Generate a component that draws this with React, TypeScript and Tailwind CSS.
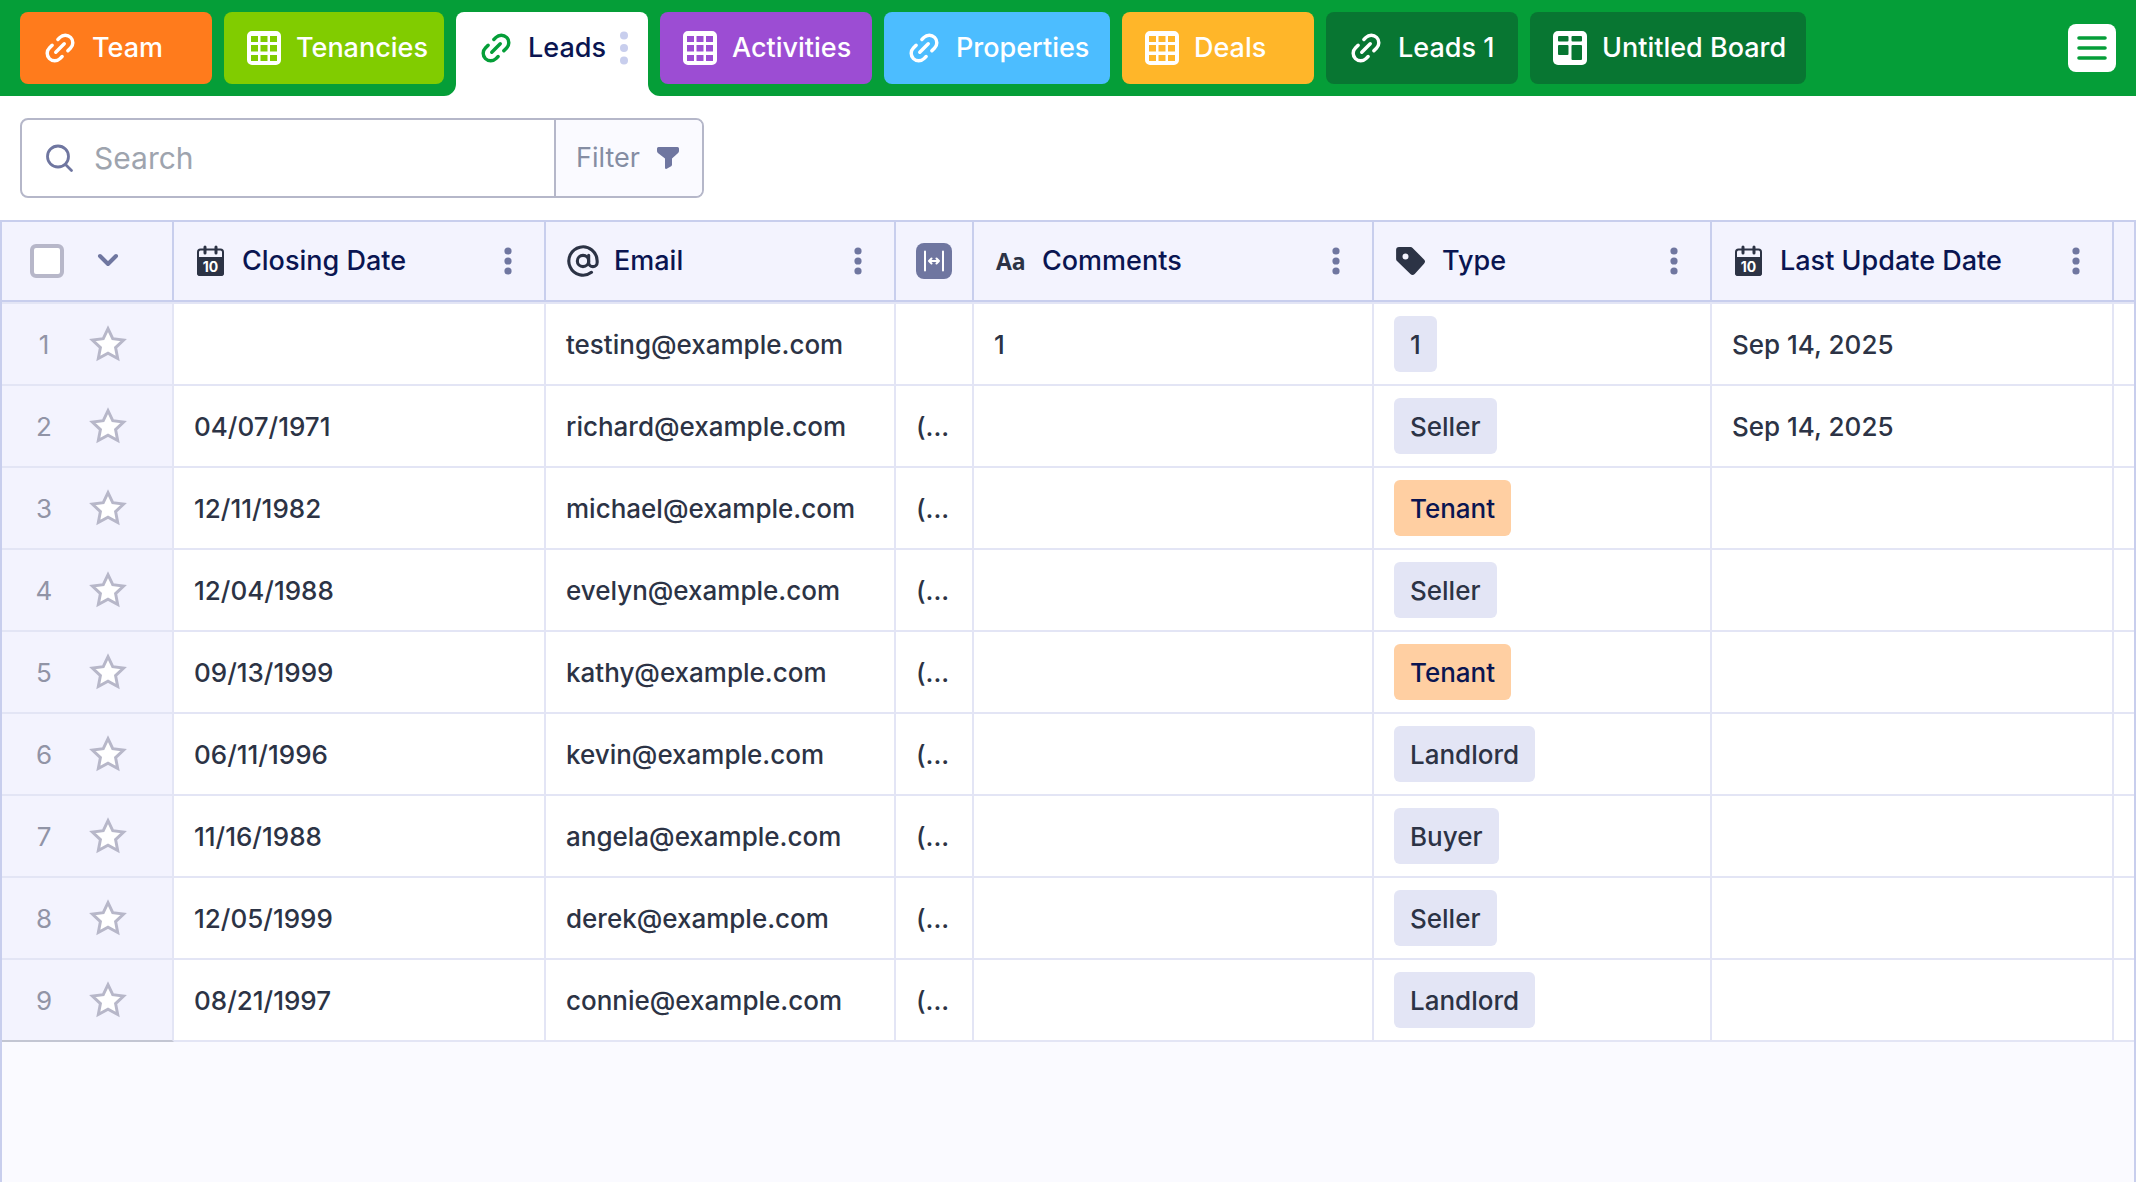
import type { ReactNode } from "react";
import { AtSign } from "lucide-react";

type IconProps = { className?: string };

const LinkIcon = ({ className = "" }: IconProps) => (
  <svg viewBox="0 0 24 24" className={`size-10 p-0.5 ${className}`} fill="none" stroke="currentColor" strokeWidth="2.3" strokeLinecap="round" aria-hidden="true">
    <g transform="rotate(-45 12 12)">
      <path d="M9 17H7A5 5 0 0 1 7 7h2.6" />
      <path d="M15 7h2a5 5 0 0 1 0 10h-2.6" />
      <path d="M8 12h8" />
    </g>
  </svg>
);

const GridIcon = () => (
  <svg viewBox="0 0 40 40" className="size-10" fill="currentColor" aria-hidden="true">
    <path
      fillRule="evenodd"
      d="M8 3h24a5 5 0 0 1 5 5v24a5 5 0 0 1-5 5H8a5 5 0 0 1-5-5V8a5 5 0 0 1 5-5ZM7 8v6h7V8ZM16.500 8v6h7V8ZM26 8v6h7V8ZM7 17v6.500h7V17ZM16.500 17v6.500h7V17ZM26 17v6.500h7V17ZM7 27v6h7v-6ZM16.500 27v6h7v-6ZM26 27v6h7v-6Z"
    />
  </svg>
);

const BoardIcon = () => (
  <svg viewBox="0 0 40 40" className="size-10" aria-hidden="true">
    <rect x="3" y="3" width="34" height="34" rx="5" fill="currentColor" />
    <g fill="#087632">
      <rect x="8" y="8" width="10.500" height="5.500" rx="1" />
      <rect x="21.500" y="8" width="10.500" height="5.500" rx="1" />
      <rect x="8" y="17" width="10.500" height="10" rx="1" />
      <rect x="21.500" y="17" width="10.500" height="15" rx="1" />
    </g>
  </svg>
);

const CalendarIcon = () => (
  <svg viewBox="0 0 32 32" className="size-8" aria-hidden="true">
    <rect x="4" y="4.500" width="25" height="25.500" rx="2.500" fill="none" stroke="#2c3345" strokeWidth="2" />
    <path d="M3 12h27v16a3 3 0 0 1-3 3H6a3 3 0 0 1-3-3Z" fill="#2c3345" />
    <path d="M11 2v6M22 2v6" stroke="#2c3345" strokeWidth="3" strokeLinecap="round" />
    <text x="16.500" y="27" textAnchor="middle" fontSize="14" fontWeight="700" fill="#fff" fontFamily="Inter, sans-serif">10</text>
  </svg>
);

const TagIcon = () => (
  <svg viewBox="0 0 32 32" className="size-8" aria-hidden="true">
    <path
      fillRule="evenodd"
      fill="#2c3345"
      d="M5 2h11.500a3 3 0 0 1 2.100.900L30 14.500a3 3 0 0 1 0 4.200L20.700 29a3 3 0 0 1-4.300 0L3 16a3 3 0 0 1-.900-2.100V5A3 3 0 0 1 5 2Zm6.500 6.500a3 3 0 1 0 0 6 3 3 0 0 0 0-6Z"
    />
  </svg>
);

const DotsIcon = ({ className = "" }: IconProps) => (
  <svg viewBox="0 0 8 28" className={className} fill="currentColor" aria-hidden="true">
    <circle cx="4" cy="4" r="3.600" />
    <circle cx="4" cy="14" r="3.600" />
    <circle cx="4" cy="24" r="3.600" />
  </svg>
);

const StarIcon = () => (
  <svg viewBox="1 1 38 38" className="size-10" aria-hidden="true">
    <path
      d="M20 5.500l4.500 9.500 10.300 1.300-7.600 7.100 2 10.400-9.200-5.100-9.200 5.100 2-10.400-7.600-7.100L15.500 15Z"
      fill="#fff"
      stroke="#b7b7c9"
      strokeWidth="2.800"
    />
  </svg>
);

type Tab = { label: string; icon: ReactNode; style: string };

const tabs: Tab[] = [
  { label: "Team", icon: <LinkIcon />, style: "w-[192px] bg-[#ff7b1c]" },
  { label: "Tenancies", icon: <GridIcon />, style: "w-[220px] bg-[#81cc00]" },
  { label: "Leads", icon: <LinkIcon className="text-[#059e38]" />, style: "" },
  { label: "Activities", icon: <GridIcon />, style: "w-[212px] bg-[#9c4dd3]" },
  { label: "Properties", icon: <LinkIcon />, style: "w-[226px] bg-[#4cbdff]" },
  { label: "Deals", icon: <GridIcon />, style: "w-[192px] bg-[#ffb629]" },
  { label: "Leads 1", icon: <LinkIcon />, style: "w-[192px] bg-[#087632]" },
  { label: "Untitled Board", icon: <BoardIcon />, style: "w-[276px] bg-[#087632]" },
];

const columns: { label: string; icon: ReactNode; width: string }[] = [
  { label: "Closing Date", icon: <CalendarIcon />, width: "w-[372px]" },
  { label: "Email", icon: <AtSign className="size-[34px] shrink-0 text-[#2c3345]" strokeWidth={2.2} />, width: "w-[350px]" },
  { label: "", icon: null, width: "w-[78px]" },
  {
    label: "Comments",
    icon: <span className="pl-0.5 font-['Open_Sans',sans-serif] text-[23px] font-bold text-[#2c3345]">Aa</span>,
    width: "w-[400px]",
  },
  { label: "Type", icon: <TagIcon />, width: "w-[338px]" },
  { label: "Last Update Date", icon: <CalendarIcon />, width: "w-[402px]" },
];

const rows = [
  { date: "", email: "testing@example.com", phone: "", comments: "1", type: "1", updated: "Sep 14, 2025" },
  { date: "04/07/1971", email: "richard@example.com", phone: "(...", comments: "", type: "Seller", updated: "Sep 14, 2025" },
  { date: "12/11/1982", email: "michael@example.com", phone: "(...", comments: "", type: "Tenant", updated: "" },
  { date: "12/04/1988", email: "evelyn@example.com", phone: "(...", comments: "", type: "Seller", updated: "" },
  { date: "09/13/1999", email: "kathy@example.com", phone: "(...", comments: "", type: "Tenant", updated: "" },
  { date: "06/11/1996", email: "kevin@example.com", phone: "(...", comments: "", type: "Landlord", updated: "" },
  { date: "11/16/1988", email: "angela@example.com", phone: "(...", comments: "", type: "Buyer", updated: "" },
  { date: "12/05/1999", email: "derek@example.com", phone: "(...", comments: "", type: "Seller", updated: "" },
  { date: "08/21/1997", email: "connie@example.com", phone: "(...", comments: "", type: "Landlord", updated: "" },
];

function TabBar() {
  return (
    <header className="flex h-24 items-start justify-between bg-[#059e38] px-5 pt-3">
      <nav className="flex gap-3 text-[27px] font-medium text-white" aria-label="Tabs">
        {tabs.map((tab) =>
          tab.label === "Leads" ? (
            <div key={tab.label} className="relative flex h-[84px] w-[192px] items-start rounded-t-lg bg-white">
              <button type="button" aria-current="page" className="flex h-[72px] items-center gap-3 pl-5 text-[#0a1551]">
                {tab.icon}
                {tab.label}
              </button>
              <button type="button" aria-label="Tab options" className="ml-auto mr-5 flex h-[72px] items-center text-[#c8ceed]">
                <svg viewBox="0 0 8 34" className="h-[34px] w-2" fill="currentColor" aria-hidden="true">
                  <circle cx="4" cy="4.500" r="4" />
                  <circle cx="4" cy="17" r="4" />
                  <circle cx="4" cy="29.500" r="4" />
                </svg>
              </button>
              <svg viewBox="0 0 12 12" className="absolute bottom-0 right-full size-3" fill="#fff" aria-hidden="true">
                <path d="M12 0v12H0A12 12 0 0 0 12 0Z" />
              </svg>
              <svg viewBox="0 0 12 12" className="absolute bottom-0 left-full size-3" fill="#fff" aria-hidden="true">
                <path d="M0 0v12h12A12 12 0 0 1 0 0Z" />
              </svg>
            </div>
          ) : (
            <button
              key={tab.label}
              type="button"
              className={`flex h-[72px] items-center gap-3 whitespace-nowrap rounded-lg pl-5 ${tab.style}`}
            >
              {tab.icon}
              {tab.label}
            </button>
          ),
        )}
      </nav>
      <button type="button" aria-label="Menu" className="mt-3 flex size-12 items-center justify-center rounded-lg bg-white">
        <svg viewBox="0 0 48 48" className="size-12" stroke="#059e38" strokeWidth="3.600" strokeLinecap="round" aria-hidden="true">
          <path d="M11 14h26M11 24h26M11 34h26" />
        </svg>
      </button>
    </header>
  );
}

function Toolbar() {
  return (
    <div className="flex px-5 py-[22px]">
      <div className="flex h-20 w-[684px] overflow-hidden rounded-lg border-2 border-[#b5b7c9]">
        <label className="flex min-w-0 flex-1 items-center gap-[18px] pl-[22px]">
          <svg viewBox="0 0 32 32" className="size-8 shrink-0" fill="none" stroke="#6f76a0" strokeWidth="2.800" strokeLinecap="round" aria-hidden="true">
            <circle cx="14" cy="14.500" r="10.500" />
            <path d="M21.500 22.500l6 6" />
          </svg>
          <input
            type="search"
            placeholder="Search"
            aria-label="Search"
            className="min-w-0 flex-1 bg-transparent text-[30px] text-[#2c3345] outline-none placeholder:text-[#9ea4ae]"
          />
        </label>
        <button
          type="button"
          className="flex w-[148px] items-center gap-4 border-l-2 border-[#b5b7c9] bg-[#fafaff] pl-5 text-[27px] text-[#858da3]"
        >
          Filter
          <svg viewBox="0 0 24 24" className="size-6" fill="#6f76a0" aria-hidden="true">
            <path d="M2.500 1h19a1.500 1.500 0 0 1 1.500 1.500V5c0 .800-.300 1.500-.900 2L16 12.500v6.300c0 .600-.300 1.100-.800 1.400l-4.500 2.500A1.200 1.200 0 0 1 9 21.600v-9.100L1.900 7A2.500 2.500 0 0 1 1 5V2.500A1.500 1.500 0 0 1 2.500 1Z" />
          </svg>
        </button>
      </div>
    </div>
  );
}

const headCell = "h-[82px] border-y-2 border-r-2 border-[#c8ceed] bg-[#f3f3fe] p-0 text-left font-medium";

function HeadRow() {
  return (
    <tr className="text-[27px] text-[#0a1551]">
      <th scope="col" className={`${headCell} w-[172px]`}>
        <div className="flex items-center gap-7 pl-7">
          <input
            type="checkbox"
            aria-label="Select all rows"
            className="size-[34px] appearance-none rounded-md border-4 border-[#b7b7c9] bg-white"
          />
          <button type="button" aria-label="Selection options" className="flex size-8 items-center justify-center">
            <svg viewBox="0 0 24 24" className="size-6" fill="none" stroke="#6f76a0" strokeWidth="4" strokeLinecap="round" strokeLinejoin="round" aria-hidden="true">
              <path d="M4 7l8 8 8-8" />
            </svg>
          </button>
        </div>
      </th>
      {columns.map((column) => (
        <th key={column.label} scope="col" className={`${headCell} ${column.width}`}>
          {column.label ? (
            <div className="flex items-center pl-5 pr-4">
              <span className="mr-4 flex w-8 shrink-0 items-center">{column.icon}</span>
              {column.label}
              <button type="button" aria-label={`${column.label} options`} className="ml-auto flex h-10 w-10 items-center justify-center text-[#6f76a0]">
                <DotsIcon className="h-7 w-2" />
              </button>
            </div>
          ) : (
            <button type="button" aria-label="Expand column" className="ml-5 flex size-9 items-center justify-center rounded-lg bg-[#6f76a0]">
              <svg viewBox="0 0 36 36" className="size-9" fill="none" stroke="#fff" strokeWidth="2" strokeLinecap="round" strokeLinejoin="round" aria-hidden="true">
                <path d="M9 8.500v19M27 8.500v19M13 18h10M15.500 15.500L13 18l2.500 2.500M20.500 15.500L23 18l-2.500 2.500" />
              </svg>
            </button>
          )}
        </th>
      ))}
      <td className="border-y-2 border-[#c8ceed] bg-[#f3f3fe]" />
    </tr>
  );
}

const cell = "h-[82px] border-b-2 border-r-2 border-[#e3e5f5] bg-white p-0 pl-5 group-first:h-[84px] group-first:border-t-2";

export default function App() {
  return (
    <div className="flex min-h-screen flex-col bg-white font-['Inter',sans-serif]">
      <TabBar />
      <main className="flex flex-1 flex-col">
        <Toolbar />
        <div className="flex-1 overflow-hidden border-x-2 border-[#c8ceed] bg-[#fafaff]">
          <table className="w-full table-fixed border-separate border-spacing-0">
            <thead>
              <HeadRow />
            </thead>
            <tbody className="text-[26px] font-[450] text-[#2c3345]">
              {rows.map((row, index) => (
                <tr key={row.email} className="group">
                  <th
                    scope="row"
                    className="h-[82px] border-b-2 border-r-2 border-[#e3e5f5] bg-[#f3f3fe] p-0 font-normal text-[#9194a6] group-first:h-[84px] group-first:border-t-2 group-last:border-b-[#c3c6d3]"
                  >
                    <div className="flex items-center pl-6">
                      <span className="w-9 text-center">{index + 1}</span>
                      <button type="button" aria-label={`Star row ${index + 1}`} className="ml-[26px]">
                        <StarIcon />
                      </button>
                    </div>
                  </th>
                  <td className={cell}>{row.date}</td>
                  <td className={cell}>{row.email}</td>
                  <td className={cell}>{row.phone}</td>
                  <td className={cell}>{row.comments}</td>
                  <td className={cell}>
                    <span
                      className={`flex h-14 w-fit items-center rounded-md px-4 ${
                        row.type === "Tenant" ? "bg-[#ffcfa2] text-[#0a1551]" : "bg-[#e3e5f5]"
                      }`}
                    >
                      {row.type}
                    </span>
                  </td>
                  <td className={cell}>{row.updated}</td>
                  <td className="border-b-2 border-[#e3e5f5] bg-white p-0 group-first:border-t-2" />
                </tr>
              ))}
            </tbody>
          </table>
        </div>
      </main>
    </div>
  );
}
